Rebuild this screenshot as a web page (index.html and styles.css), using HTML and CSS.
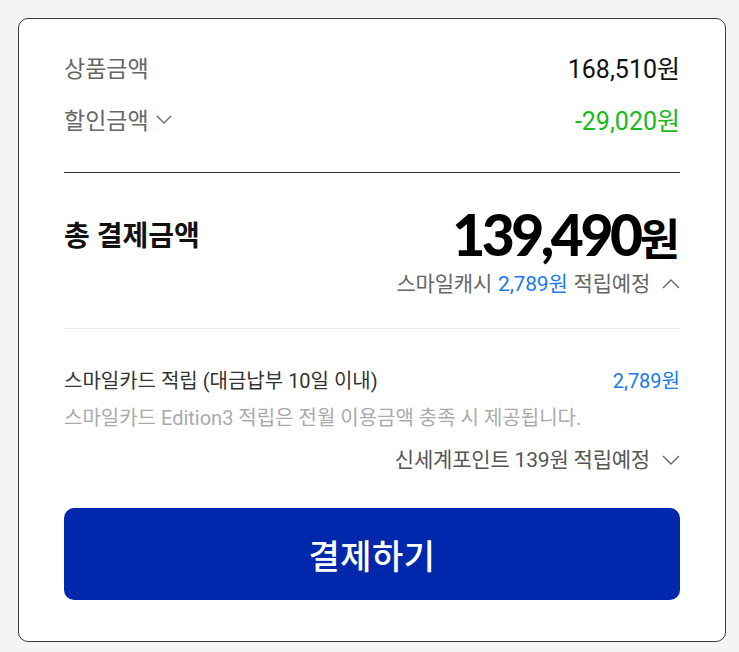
FILE: index.html
```html
<!DOCTYPE html>
<html lang="ko">
<head>
  <meta charset="UTF-8" />
  <title>결제금액</title>
  <meta name="viewport" content="width=device-width, initial-scale=1.0" />
  <link rel="stylesheet" href="styles.css">
</head>
<body>
  <div class="card">
    <div class="summary">
      <div class="row">
        <span class="label">상품금액</span>
        <span class="value">168,510원</span>
      </div>
      <div class="row">
        <span class="label">할인금액
          <svg class="chev" width="16" height="9" viewBox="0 0 16 9"><path d="M1 1l7 7 7-7" fill="none" stroke="#666" stroke-width="1.3"/></svg>
        </span>
        <span class="value green">-29,020원</span>
      </div>
    </div>

    <div class="total">
      <div class="row total-row">
        <span class="total-label">총 결제금액</span>
        <span class="total-value">139,490<span class="won">원</span></span>
      </div>
      <div class="note-line">
        스마일캐시 <span class="blue">2,789원</span> 적립예정
        <svg class="chev" width="18" height="10" viewBox="0 0 18 10"><path d="M1 9l8-8 8 8" fill="none" stroke="#666" stroke-width="1.4"/></svg>
      </div>
    </div>

    <div class="reward">
      <div class="row card-row">
        <span>스마일카드 적립 (대금납부 10일 이내)</span>
        <span class="blue">2,789원</span>
      </div>
      <p class="hint">스마일카드 Edition3 적립은 전월 이용금액 충족 시 제공됩니다.</p>
      <div class="note-line point">
        신세계포인트 139원 적립예정
        <svg class="chev" width="18" height="10" viewBox="0 0 18 10"><path d="M1 1l8 8 8-8" fill="none" stroke="#666" stroke-width="1.4"/></svg>
      </div>
    </div>

    <button class="pay">결제하기</button>
  </div>
</body>
</html>
```

FILE: styles.css
```css
body {
  margin: 0;
  padding: 18px 13px 12px 18px;
  background: #f4f4f4;
  font-family: Roboto, "Noto Sans CJK KR", sans-serif;
  color: #222;
}
.card {
  background: #fff;
  border: 1px solid #3a3a3a;
  border-radius: 10px;
  padding: 23px 45px 41px;
}
.row {
  display: flex;
  justify-content: space-between;
  align-items: center;
}
.summary .row {
  height: 50px;
  margin-bottom: 2px;
}
.label {
  font-size: 23px;
  color: #666;
  display: flex;
  align-items: center;
  gap: 7px;
}
.value {
  font-size: 25px;
  color: #111;
}
.green {
  color: #1cb81c;
}
.blue {
  color: #1a7bea;
}
.total {
  margin-top: 28px;
  border-top: 1px solid #333;
  padding-top: 31px;
  padding-bottom: 32px;
  border-bottom: 1px solid #ececec;
}
.total-row {
  height: 60px;
}
.total-label {
  font-size: 28px;
  font-weight: 700;
  color: #111;
}
.total-value {
  font-family: Lato, "Noto Sans CJK KR", sans-serif;
  font-size: 57px;
  font-weight: 900;
  color: #000;
  letter-spacing: -3.5px;
}
.won {
  font-family: "Noto Sans CJK KR", sans-serif;
  font-size: 44px;
  font-weight: 700;
  letter-spacing: 0;
}
.note-line {
  margin-top: 8px;
  display: flex;
  justify-content: flex-end;
  align-items: center;
  gap: 6px;
  font-size: 21px;
  line-height: 24px;
  color: #666;
  letter-spacing: -0.2px;
}
.note-line .chev {
  margin-left: 6px;
}
.reward {
  padding-top: 39px;
}
.card-row {
  font-size: 20px;
  line-height: 26px;
  color: #333;
}
.hint {
  margin: 12px 0 0;
  font-size: 20px;
  line-height: 24px;
  color: #aaa;
}
.point {
  margin-top: 18px;
  color: #555;
}
.pay {
  display: block;
  width: 100%;
  height: 92px;
  margin-top: 36px;
  border: 0;
  border-radius: 10px;
  background: #0028ad;
  color: #fff;
  font-family: "Noto Sans CJK KR", sans-serif;
  font-size: 34px;
  font-weight: 500;
  letter-spacing: 0.5px;
}
```
